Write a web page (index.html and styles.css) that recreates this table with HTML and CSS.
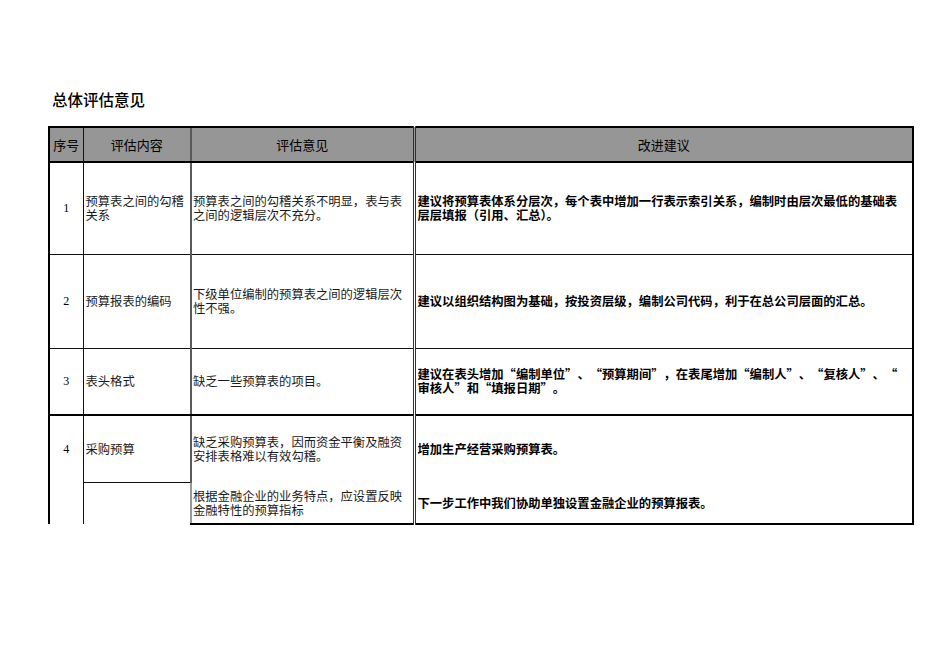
FILE: index.html
```html
<!DOCTYPE html>
<html lang="zh-CN">
<head>
<meta charset="utf-8">
<title>总体评估意见</title>
<link rel="stylesheet" href="styles.css">
</head>
<body>
<div class="page">
  <h1 class="title">总体评估意见</h1>
  <table class="sheet">
    <colgroup>
      <col class="c-no">
      <col class="c-item">
      <col class="c-opinion">
      <col class="c-advice">
    </colgroup>
    <thead>
      <tr class="head">
        <th class="no">序号</th>
        <th class="item">评估内容</th>
        <th class="opinion">评估意见</th>
        <th class="advice">改进建议</th>
      </tr>
    </thead>
    <tbody>
      <tr class="r1">
        <td class="no">1</td>
        <td class="item">预算表之间的勾稽<br>关系</td>
        <td class="opinion">预算表之间的勾稽关系不明显，表与表<br>之间的逻辑层次不充分。</td>
        <td class="advice">建议将预算表体系分层次，每个表中增加一行表示索引关系，编制时由层次最低的基础表<br>层层填报（引用、汇总）。</td>
      </tr>
      <tr class="r2">
        <td class="no">2</td>
        <td class="item">预算报表的编码</td>
        <td class="opinion">下级单位编制的预算表之间的逻辑层次<br>性不强。</td>
        <td class="advice">建议以组织结构图为基础，按投资层级，编制公司代码，利于在总公司层面的汇总。</td>
      </tr>
      <tr class="r3">
        <td class="no">3</td>
        <td class="item">表头格式</td>
        <td class="opinion">缺乏一些预算表的项目。</td>
        <td class="advice">建议在表头增加<span class="qo">“</span>编制单位<span class="qc">”</span><span class="pn">、</span><span class="qo">“</span>预算期间<span class="qc">”</span>，在表尾增加<span class="qo">“</span>编制人<span class="qc">”</span><span class="pn">、</span><span class="qo">“</span>复核人<span class="qc">”</span><span class="pn">、</span><span class="qo">“</span><br>审核人<span class="qc">”</span>和<span class="qo">“</span>填报日期<span class="qc">”</span>。</td>
      </tr>
      <tr class="r4">
        <td class="no">4</td>
        <td class="item">采购预算</td>
        <td class="opinion">缺乏采购预算表，因而资金平衡及融资<br>安排表格难以有效勾稽。</td>
        <td class="advice">增加生产经营采购预算表。</td>
      </tr>
      <tr class="r5">
        <td class="no"></td>
        <td class="item"></td>
        <td class="opinion">根据金融企业的业务特点，应设置反映<br>金融特性的预算指标</td>
        <td class="advice">下一步工作中我们协助单独设置金融企业的预算报表。</td>
      </tr>
    </tbody>
  </table>
</div>
</body>
</html>
```

FILE: styles.css
```css
html, body {
  margin: 0;
  padding: 0;
  background: #ffffff;
}

.page {
  padding: 89px 0 0 48px;
  font-family: "Noto Sans CJK SC", "Noto Sans", sans-serif;
  color: #000;
}

.title {
  margin: 0 0 17px 4px;
  font-size: 15.5px;
  line-height: 20px;
  font-weight: 500;
}

.sheet {
  border-collapse: collapse;
  table-layout: fixed;
  width: 864px;
  font-size: 12.3px;
}

.c-no { width: 34px; }
.c-item { width: 108px; }
.c-opinion { width: 223px; }
.c-advice { width: 499px; }

.sheet th,
.sheet td {
  padding: 0;
  vertical-align: middle;
  border-left: 1px solid #111;
  border-bottom: 1px solid #111;
}

.sheet th {
  background: #969696;
  font-size: 13px;
  font-weight: 400;
  line-height: 16px;
  text-align: center;
  border-top: 2px solid #000;
  border-bottom: 2px solid #000;
}

.head { height: 35px; }
.r1 { height: 92px; }
.r2 { height: 94px; }
.r3 { height: 67px; }
.r4 { height: 67px; }
.r5 { height: 42px; }

.sheet .no {
  border-left: 2px solid #000;
  text-align: center;
}

.sheet td.no {
  font-family: "Liberation Serif", serif;
  font-size: 12px;
}

.sheet .opinion {
  border-left: 2px solid #5a5a5a;
}

.sheet .advice {
  border-left: 3px double #333;
  border-right: 2px solid #000;
}

.sheet td.item,
.sheet td.opinion {
  font-weight: 400;
  line-height: 14px;
  color: #1a1a1a;
}

.sheet td.item { padding-left: 2px; }
.sheet td.opinion { padding-left: 1px; }

.sheet td.advice {
  font-weight: 700;
  line-height: 14px;
  padding-left: 2px;
}

.qo,
.qc,
.pn {
  display: inline-block;
  width: 1em;
}

.qo { text-align: right; }
.qc { text-align: left; }
.pn { text-align: center; }

.r3 td { border-bottom: 2px solid #000; }

.r4 td.no { border-bottom: none; }
.r4 td.opinion,
.r4 td.advice { border-bottom: none; }

.r5 td.no { border-bottom: none; }
.r5 td.item { border-bottom: none; }
.r5 td.opinion {
  border-left-color: #999;
  border-bottom: 2px solid #000;
}
.r5 td.advice { border-bottom: 2px solid #000; }
```
